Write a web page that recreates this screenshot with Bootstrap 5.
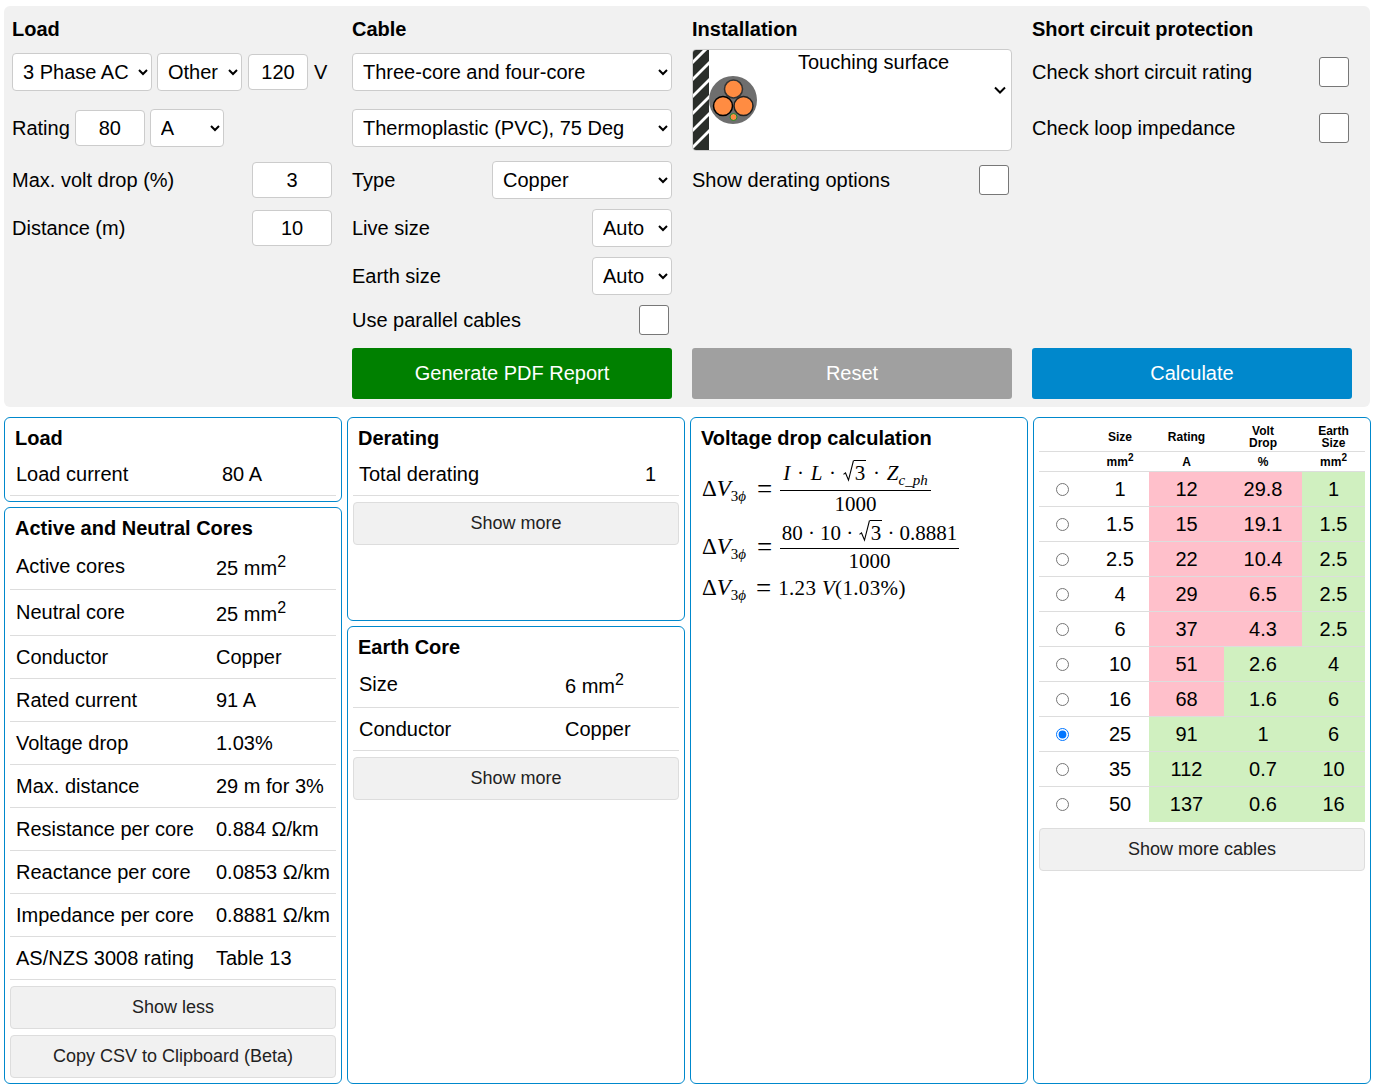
<!DOCTYPE html>
<html lang="en">
<head>
    <meta charset="UTF-8">
    <meta name="viewport" content="width=device-width, initial-scale=1.0">
    <title>Cable calculator</title>
    <link href="https://cdn.jsdelivr.net/npm/bootstrap@5.3.2/dist/css/bootstrap.min.css" rel="stylesheet">
    <style>
        body { margin: 0; background: #fff; color: #000; font-family: "Liberation Sans", Arial, sans-serif; font-size: 20px; line-height: 24px; }
        .page-wrap { width: 1379px; padding: 6px 8px 0 4px; }
        .input-panel { background: #f1f1f1; border-radius: 6px; padding: 11px 8px 8px; margin-right: 1px; }
        .panel-cols { display: grid; grid-template-columns: repeat(4, 320px); column-gap: 20px; }
        .col-title { font-size: 20px; font-weight: 700; line-height: 24px; margin: 0 0 12px; }
        .ctl-row { height: 38px; display: flex; align-items: center; }
        .form-col > .ctl-row:nth-child(3) { margin-top: 18px; }
        .form-col > .ctl-row:nth-child(4) { margin-top: 14px; }
        .form-col > .ctl-row:nth-child(5), .form-col > .ctl-row:nth-child(6) { margin-top: 10px; }
        .form-col > .ctl-row:nth-child(7) { margin-top: 6px; }
        .panel-cols.btn-cols { margin-top: 9px; }
        .gap-l5 { margin-left: 5px; }
        .gap-l6 { margin-left: 6px; }

        .sel { appearance: auto; -webkit-appearance: auto; background-image: none; height: 38px; padding: 0 2px 0 6px; font-size: 20px; line-height: 24px; color: #000; border: 1px solid #ccc; border-radius: 4px; background-color: #fff; }
        .num { height: 36px; padding: 0; text-align: center; font-size: 20px; color: #000; border: 1px solid #ccc; border-radius: 4px; }
        .w-phase { width: 140px; } .w-other { width: 85px; } .w-volt { width: 60px; }
        .w-rating { width: 70px; } .w-unit { width: 74px; } .w-80 { width: 80px; } .w-type { width: 180px; }
        .form-check-input.chk { width: 30px; height: 30px; margin: 0 3px 0 0; border: 1px solid #777; border-radius: 3px; flex: none; }

        .install-box { height: 102px; margin-top: -4px; display: flex; background: #fff; border: 1px solid #ccc; border-radius: 4px; overflow: hidden; }
        .install-box + .ctl-row { margin-top: 10px !important; }
        .install-box svg.cable-pic { width: 65px; height: 100px; flex: none; }
        .install-text { flex: 1; text-align: center; line-height: 24px; }
        .install-chev { width: 22px; flex: none; display: flex; align-items: center; justify-content: center; padding-bottom: 20px; }

        .act-btn { height: 51px; font-size: 20px; color: #fff; border: 0; border-radius: 3px; width: 100%; padding: 0 0 2px; }
        .act-green, .act-green:hover { background: #008000; color: #fff; }
        .act-grey, .act-grey:hover { background: #a0a0a0; color: #fff; }
        .act-blue, .act-blue:hover { background: #0088cc; color: #fff; }

        .result-grid { display: grid; grid-template-columns: repeat(4, 338px); column-gap: 5px; height: 667px; margin-top: 10px; }
        .result-col { display: flex; flex-direction: column; gap: 5px; }
        .res-card { border: 1px solid #0088cc; border-radius: 6px; padding: 8px 5px 0; background: #fff; }
        .fill { flex: 1; }
        .h-derate { height: 204px; flex: none; }
        .h-load { height: 85px; flex: none; }
        .res-title { font-size: 20px; font-weight: 700; line-height: 24px; margin: 0 0 0 5px; }
        .res-row { display: flex; align-items: center; height: 43px; padding-left: 6px; border-bottom: 1px solid #ddd; white-space: nowrap; }
        .res-row.tall { height: 46px; padding-bottom: 2px; }
        .res-title + .res-row { margin-top: 3px; }
        .cores-card .res-title + .res-row { margin-top: 4px; }
        .lbl-200 { width: 200px; } .lbl-206 { width: 206px; } .lbl-286 { width: 286px; }
        .res-val sup { font-size: 16px; line-height: 0; top: -8px; position: relative; vertical-align: baseline; }
        .res-val.squared { padding-top: 4px; }
        .more-btn { display: block; width: 100%; height: 43px; margin-top: 6px; padding: 0; font-size: 18px; color: #222; background: #f1f1f1; border: 1px solid #ddd; border-radius: 4px; }
        .more-btn:hover { background: #f1f1f1; color: #222; }

        .math { font-family: "Liberation Serif", "DejaVu Serif", serif; font-size: 21px; margin: 8px 0 0 6px; }
        .eq { display: flex; align-items: flex-start; white-space: nowrap; }
        .eq-a { height: 62px; }
        .eq-b { height: 56px; }
        .eq-c { height: 24px; }
        .lhs { font-size: 23px; line-height: 24px; }
        .eq-a .lhs { margin-top: 19px; }
        .eq-b .lhs { margin-top: 15px; }
        .eq sub { font-size: 15px; line-height: 0; bottom: -5px; position: relative; vertical-align: baseline; }
        .lhs sub { padding-right: 3px; }
        .eq sub sub { font-size: 11px; bottom: -1px; }
        .eq-sign { display: inline-block; width: 31px; text-align: center; font-size: 27px; line-height: 24px; }
        .eq-a .eq-sign { margin-top: 19px; }
        .eq-b .eq-sign { margin-top: 15px; }
        .eq-c .eq-sign { width: 29px; }
        .frac { display: inline-flex; flex-direction: column; align-items: center; }
        .frac-top { border-bottom: 1px solid #000; padding: 0 3px; text-align: center; width: 100%; }
        .eq-a .frac-top { height: 33px; line-height: 30px; word-spacing: 1.5px; }
        .eq-a .frac-bot { line-height: 26px; }
        .eq-b .frac-top { height: 29px; line-height: 26px; padding: 0 1.5px; }
        .eq-b .frac-bot { line-height: 24px; }
        .eq-result { line-height: 24px; letter-spacing: .35px; }
        .root { display: inline-flex; align-items: flex-end; vertical-align: -3px; line-height: 19px; }
        .root svg { width: 11px; height: 23px; flex: none; }
        .root span { border-top: 1px solid #000; padding: 0 1px; height: 23px; line-height: 24px; }

        .size-table { table-layout: fixed; width: 326px; margin: 0; border-collapse: collapse; color: #000; text-align: center; --bs-table-bg: transparent; }
        .size-table col.c1 { width: 52px; } .size-table col.c2 { width: 58px; } .size-table col.c3 { width: 75px; }
        .size-table col.c4 { width: 78px; } .size-table col.c5 { width: 63px; }
        .res-card.table-card { padding: 5px 5px 0; }
        .size-table th { font-size: 12px; line-height: 12px; font-weight: 700; padding: 0; vertical-align: middle; border-bottom: 1px solid #ddd; height: 28px; }
        .size-table tr.unit-row th { height: 20px; padding-top: 1px; }
        .size-table th sup { font-size: 10px; line-height: 0; top: -5px; position: relative; vertical-align: baseline; }
        .size-table td { font-size: 20px; line-height: 24px; padding: 0; height: 35px; vertical-align: middle; border-bottom: 1px solid #ddd; }
        .size-table tbody tr:last-child td { border-bottom: 0; height: 36px; }
        .size-table td.radio-cell { text-align: left; padding-left: 17px; }
        .size-table td.radio-cell input { display: block; margin: 2px 0 0; width: 13px; height: 13px; }
        .size-table tbody tr:last-child td.radio-cell input { margin-top: 0; }
        .size-table td.bad { background: #ffc0cb; }
        .size-table td.good { background: #d0f0c0; }
    </style>
</head>
<body>
<div class="page-wrap">

    <!-- Inputs -->
    <div class="input-panel">
        <div class="panel-cols">
            <div class="form-col">
                <h2 class="col-title">Load</h2>
                <div class="ctl-row">
                    <select class="sel w-phase"><option>3 Phase AC</option></select>
                    <select class="sel w-other gap-l5"><option>Other</option></select>
                    <input class="form-control num w-volt gap-l6" type="text" value="120">
                    <span class="gap-l6">V</span>
                </div>
                <div class="ctl-row">
                    <span>Rating</span>
                    <input class="form-control num w-rating gap-l5" type="text" value="80">
                    <select class="sel w-unit gap-l5"><option>A</option></select>
                </div>
                <div class="ctl-row justify-content-between">
                    <span>Max. volt drop (%)</span>
                    <input class="form-control num w-80" type="text" value="3">
                </div>
                <div class="ctl-row justify-content-between">
                    <span>Distance (m)</span>
                    <input class="form-control num w-80" type="text" value="10">
                </div>
            </div>

            <div class="form-col">
                <h2 class="col-title">Cable</h2>
                <div class="ctl-row"><select class="sel w-100"><option>Three-core and four-core</option></select></div>
                <div class="ctl-row"><select class="sel w-100"><option>Thermoplastic (PVC), 75 Deg</option></select></div>
                <div class="ctl-row justify-content-between">
                    <span>Type</span>
                    <select class="sel w-type"><option>Copper</option></select>
                </div>
                <div class="ctl-row justify-content-between">
                    <span>Live size</span>
                    <select class="sel w-80"><option>Auto</option></select>
                </div>
                <div class="ctl-row justify-content-between">
                    <span>Earth size</span>
                    <select class="sel w-80"><option>Auto</option></select>
                </div>
                <div class="ctl-row justify-content-between">
                    <span>Use parallel cables</span>
                    <input class="form-check-input chk" type="checkbox">
                </div>
            </div>

            <div class="form-col">
                <h2 class="col-title">Installation</h2>
                <div class="install-box">
                    <svg class="cable-pic" viewBox="0 0 65 100">
                        <defs><clipPath id="wallClip"><rect x="0" y="0" width="16" height="100"/></clipPath></defs>
                        <rect x="0" y="0" width="16" height="100" fill="#2a2e2a"/>
                        <g clip-path="url(#wallClip)" stroke="#fff" stroke-width="3">
                            <line x1="-2" y1="14" x2="18" y2="-6"/>
                            <line x1="-2" y1="31" x2="18" y2="11"/>
                            <line x1="-2" y1="48" x2="18" y2="28"/>
                            <line x1="-2" y1="65" x2="18" y2="45"/>
                            <line x1="-2" y1="82" x2="18" y2="62"/>
                            <line x1="-2" y1="99" x2="18" y2="79"/>
                        </g>
                        <circle cx="40" cy="50" r="24" fill="#6e6e6e"/>
                        <circle cx="40.5" cy="39" r="9" fill="#ff8c42" stroke="#333" stroke-width="1.5"/>
                        <circle cx="30" cy="56" r="9.5" fill="#ff8c42" stroke="#000" stroke-width="1.5"/>
                        <circle cx="50.5" cy="56" r="9.5" fill="#ff8c42" stroke="#222" stroke-width="1.5"/>
                        <circle cx="40.5" cy="67" r="3.5" fill="#ff8c42" stroke="#1c8a2c" stroke-width="1"/>
                    </svg>
                    <div class="install-text">Touching surface</div>
                    <div class="install-chev">
                        <svg width="12" height="8" viewBox="0 0 12 8"><path d="M1 1.5 L6 6.5 L11 1.5" fill="none" stroke="#000" stroke-width="2"/></svg>
                    </div>
                </div>
                <div class="ctl-row justify-content-between">
                    <span>Show derating options</span>
                    <input class="form-check-input chk" type="checkbox">
                </div>
            </div>

            <div class="form-col">
                <h2 class="col-title">Short circuit protection</h2>
                <div class="ctl-row justify-content-between">
                    <span>Check short circuit rating</span>
                    <input class="form-check-input chk" type="checkbox">
                </div>
                <div class="ctl-row justify-content-between">
                    <span>Check loop impedance</span>
                    <input class="form-check-input chk" type="checkbox">
                </div>
            </div>
        </div>

        <div class="panel-cols btn-cols">
            <div></div>
            <button class="btn act-btn act-green">Generate PDF Report</button>
            <button class="btn act-btn act-grey">Reset</button>
            <button class="btn act-btn act-blue">Calculate</button>
        </div>
    </div>

    <!-- Results -->
    <div class="result-grid">
        <div class="result-col">
            <div class="res-card h-load">
                <h3 class="res-title">Load</h3>
                <div class="res-row"><span class="lbl-206">Load current</span><span>80 A</span></div>
            </div>
            <div class="res-card cores-card fill">
                <h3 class="res-title">Active and Neutral Cores</h3>
                <div class="res-row tall"><span class="lbl-200">Active cores</span><span class="res-val squared">25 mm<sup>2</sup></span></div>
                <div class="res-row tall"><span class="lbl-200">Neutral core</span><span class="res-val squared">25 mm<sup>2</sup></span></div>
                <div class="res-row"><span class="lbl-200">Conductor</span><span>Copper</span></div>
                <div class="res-row"><span class="lbl-200">Rated current</span><span>91 A</span></div>
                <div class="res-row"><span class="lbl-200">Voltage drop</span><span>1.03%</span></div>
                <div class="res-row"><span class="lbl-200">Max. distance</span><span>29 m for 3%</span></div>
                <div class="res-row"><span class="lbl-200">Resistance per core</span><span>0.884 Ω/km</span></div>
                <div class="res-row"><span class="lbl-200">Reactance per core</span><span>0.0853 Ω/km</span></div>
                <div class="res-row"><span class="lbl-200">Impedance per core</span><span>0.8881 Ω/km</span></div>
                <div class="res-row"><span class="lbl-200">AS/NZS 3008 rating</span><span>Table 13</span></div>
                <button class="btn more-btn">Show less</button>
                <button class="btn more-btn">Copy CSV to Clipboard (Beta)</button>
            </div>
        </div>

        <div class="result-col">
            <div class="res-card h-derate">
                <h3 class="res-title">Derating</h3>
                <div class="res-row"><span class="lbl-286">Total derating</span><span>1</span></div>
                <button class="btn more-btn">Show more</button>
            </div>
            <div class="res-card fill">
                <h3 class="res-title">Earth Core</h3>
                <div class="res-row tall"><span class="lbl-206">Size</span><span class="res-val squared">6 mm<sup>2</sup></span></div>
                <div class="res-row"><span class="lbl-206">Conductor</span><span>Copper</span></div>
                <button class="btn more-btn">Show more</button>
            </div>
        </div>

        <div class="result-col">
            <div class="res-card fill">
                <h3 class="res-title">Voltage drop calculation</h3>
                <div class="math">
                    <div class="eq eq-a">
                        <span class="lhs">Δ<i>V</i><sub>3<i>ϕ</i></sub></span><span class="eq-sign">=</span>
                        <span class="frac">
                            <span class="frac-top"><i>I</i> · <i>L</i> · <span class="root"><svg viewBox="0 0 11 24" preserveAspectRatio="none"><path d="M0.5 15 L2.5 13.5 L5.5 21 L10.5 0.5" fill="none" stroke="#000" stroke-width="1.1"/></svg><span>3</span></span> · <i>Z</i><sub><i>c_ph</i></sub></span>
                            <span class="frac-bot">1000</span>
                        </span>
                    </div>
                    <div class="eq eq-b">
                        <span class="lhs">Δ<i>V</i><sub>3<i>ϕ</i></sub></span><span class="eq-sign">=</span>
                        <span class="frac">
                            <span class="frac-top">80 · 10 · <span class="root"><svg viewBox="0 0 11 24" preserveAspectRatio="none"><path d="M0.5 15 L2.5 13.5 L5.5 21 L10.5 0.5" fill="none" stroke="#000" stroke-width="1.1"/></svg><span>3</span></span> · 0.8881</span>
                            <span class="frac-bot">1000</span>
                        </span>
                    </div>
                    <div class="eq eq-c">
                        <span class="lhs">Δ<i>V</i><sub>3<i>ϕ</i></sub></span><span class="eq-sign">=</span><span class="eq-result">1.23 <i>V</i>(1.03%)</span>
                    </div>
                </div>
            </div>
        </div>

        <div class="result-col">
            <div class="res-card table-card fill">
                <table class="table size-table">
                    <colgroup><col class="c1"><col class="c2"><col class="c3"><col class="c4"><col class="c5"></colgroup>
                    <thead>
                        <tr><th></th><th>Size</th><th>Rating</th><th>Volt<br>Drop</th><th>Earth<br>Size</th></tr>
                        <tr class="unit-row"><th></th><th>mm<sup>2</sup></th><th>A</th><th>%</th><th>mm<sup>2</sup></th></tr>
                    </thead>
                    <tbody id="sizeRows"></tbody>
                </table>
                <button class="btn more-btn">Show more cables</button>
            </div>
        </div>
    </div>
</div>

<script>
    // size, rating, volt drop, earth size
    const cables = [
        ["1", 12, 29.8, "1"], ["1.5", 15, 19.1, "1.5"], ["2.5", 22, 10.4, "2.5"], ["4", 29, 6.5, "2.5"],
        ["6", 37, 4.3, "2.5"], ["10", 51, 2.6, "4"], ["16", 68, 1.6, "6"], ["25", 91, 1, "6"],
        ["35", 112, 0.7, "10"], ["50", 137, 0.6, "16"]
    ];
    document.getElementById("sizeRows").innerHTML = cables.map(c => `
        <tr>
            <td class="radio-cell"><input type="radio" name="cableSize" ${c[0] === "25" ? "checked" : ""}></td>
            <td>${c[0]}</td>
            <td class="${c[1] < 80 ? "bad" : "good"}">${c[1]}</td>
            <td class="${c[2] > 3 ? "bad" : "good"}">${c[2]}</td>
            <td class="good">${c[3]}</td>
        </tr>`).join("");
</script>
<script src="https://cdn.jsdelivr.net/npm/bootstrap@5.3.2/dist/js/bootstrap.bundle.min.js"></script>
</body>
</html>
